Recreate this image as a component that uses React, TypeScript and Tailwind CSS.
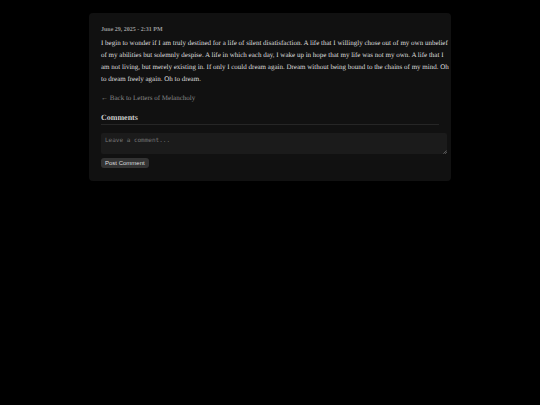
import React, { useState } from 'react'

const Comments = () => {
    const [comment, setComment] = useState('')

    return (
        <section>
            <h2 className="mt-[9px] border-b border-[#262626] text-[8px] leading-[12px] font-bold text-[#cccccc]">
                Comments
            </h2>

            <form className="mt-2" onSubmit={(e) => e.preventDefault()}>
                <div className="relative -mr-2">
                    <textarea
                        aria-label="Leave a comment"
                        placeholder="Leave a comment..."
                        value={comment}
                        onChange={(e) => setComment(e.target.value)}
                        className="block h-[21px] w-full resize-none overflow-hidden rounded-[2px] bg-[#1b1b1b] p-1 font-['DejaVu_Sans_Mono',monospace] text-[6px] leading-[6px] text-[#dddddd] placeholder:text-[#757575] outline-none"
                    />
                    <svg
                        aria-hidden="true"
                        viewBox="0 0 4 4"
                        className="pointer-events-none absolute right-0 bottom-0 size-1"
                        stroke="#888888"
                        strokeWidth="0.7"
                    >
                        <path d="M0.5 3.7L3.7 0.5M2.3 3.7L3.7 2.3" />
                    </svg>
                </div>
                <button
                    type="submit"
                    className="mt-1 block rounded-[3px] bg-[#333333] px-1 py-px font-['Liberation_Sans',sans-serif] text-[6px] leading-[8px] text-[#dddddd]"
                >
                    Post Comment
                </button>
            </form>
        </section>
    )
}

const App = () => {
    return (
        <div className="min-h-screen bg-black pt-[13px] font-['Liberation_Serif',serif] text-[#dddddd] [text-rendering:geometricPrecision]">
            <main className="mx-auto w-full max-w-[362px] rounded-[4px] bg-[#111111] px-3 pt-3 pb-[13px]">
                <article>
                    <p className="text-[6px] leading-[10px] font-bold text-[#999999]">June 29, 2025 - 2:31 PM</p>
                    <p className="mt-0.5 text-[7px] leading-[12px] whitespace-nowrap">
                        I begin to wonder if I am truly destined for a life of silent disatisfaction. A life that I
                        willingly chose out of my own unbelief
                        <br />
                        of my abilities but solemnly despise. A life in which each day, I wake up in hope that my life
                        was not my own. A life that I
                        <br />
                        am not living, but merely existing in. If only I could dream again. Dream without being bound
                        to the chains of my mind. Oh
                        <br />
                        to dream freely again. Oh to dream.
                    </p>
                </article>

                <a href="#" className="mt-2 block w-fit text-[7px] leading-[10px] text-[#888888]">
                    ← Back to Letters of Melancholy
                </a>

                <Comments />
            </main>
        </div>
    )
}

export default App
